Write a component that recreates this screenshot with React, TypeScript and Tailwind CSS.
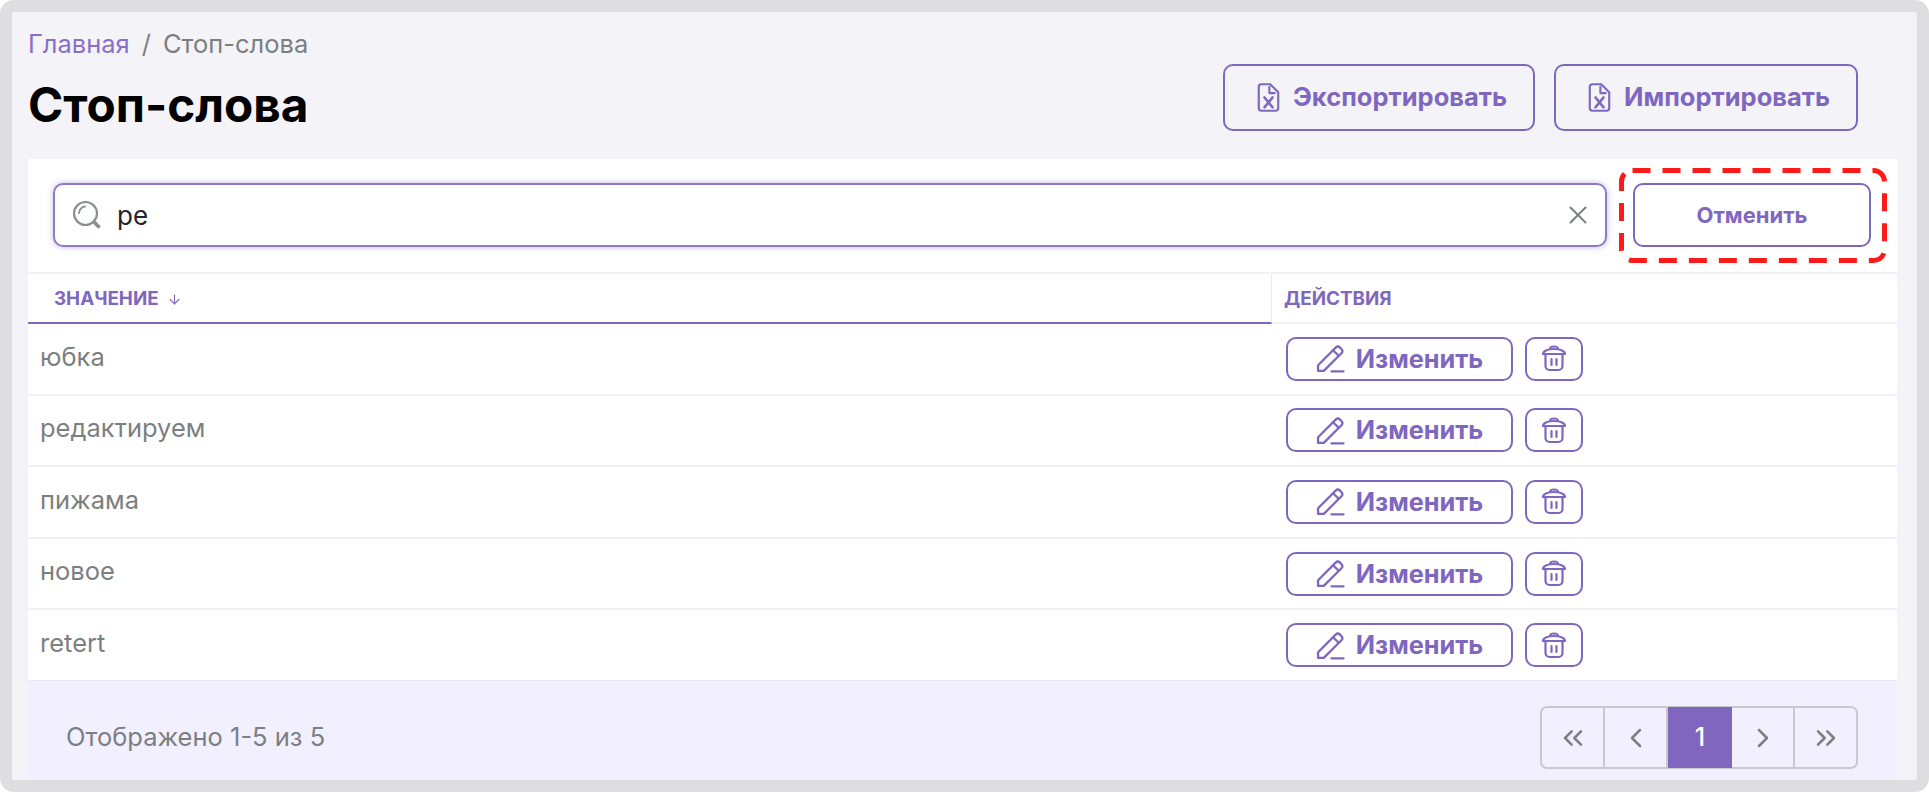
import React from "react";
import { ChevronLeft, ChevronRight, ChevronsLeft, ChevronsRight, X, ArrowDown } from "lucide-react";

const rows = ["юбка", "редактируем", "пижама", "новое", "retert"];

const FileIcon = () => (
  <svg width="23" height="31" viewBox="0 0 26 34" fill="none" stroke="currentColor" strokeWidth="2.4" strokeLinejoin="round" strokeLinecap="round">
    <path d="M5 2h10l9 9v18a3 3 0 0 1-3 3H5a3 3 0 0 1-3-3V5a3 3 0 0 1 3-3z" />
    <path d="M14 5v7h6" />
    <path d="M8.500 17l9 11M17.500 17l-9 11" strokeWidth="3" />
  </svg>
);

const SearchIcon = () => (
  <svg width="30" height="30" viewBox="0 0 30 30" fill="none" stroke="#8b9190" strokeLinecap="round">
    <circle cx="13.500" cy="13.500" r="11.500" strokeWidth="2.200" />
    <path d="M7 13a7 7 0 0 1 6-6.500" strokeWidth="2" />
    <path d="M22.500 22.500l4 4" strokeWidth="3.800" />
  </svg>
);

const PencilIcon = () => (
  <svg width="29" height="29" viewBox="0 0 28 28" fill="none" stroke="currentColor" strokeWidth="2.200" strokeLinejoin="round" strokeLinecap="round">
    <path d="M2 26v-5.500L19 3.500a3 3 0 0 1 4.200 0l1.300 1.300a3 3 0 0 1 0 4.200L7.500 26H2z" />
    <path d="M16.500 6l5.500 5.500" />
    <path d="M15 26.500h11.500" />
  </svg>
);

const TrashIcon = () => (
  <svg width="26" height="27" viewBox="0 0 26 27" fill="none" stroke="currentColor" strokeWidth="2.200" strokeLinejoin="round" strokeLinecap="round">
    <path d="M2 9c0-2.500 4-5 11-5s11 2.500 11 5H2z" />
    <path d="M9 4c0-1.500 1.500-2.500 4-2.500S17 2.500 17 4" />
    <path d="M4.500 9v12a4 4 0 0 0 4 4h9a4 4 0 0 0 4-4V9" />
    <path d="M10.500 14v6M15.500 14v6" />
  </svg>
);

const OutlineButton = ({ icon, label, width }: { icon: React.ReactNode; label: string; width: string }) => (
  <button className={`${width} h-[67px] flex items-center justify-center gap-[13px] pl-[6px] rounded-[10px] border-2 border-[#7f67bf] text-[#7f67bf] text-[25.5px] font-bold`}>
    {icon}
    {label}
  </button>
);

const PageCell = ({ children, active }: { children: React.ReactNode; active?: boolean }) => (
  <div
    className={
      active
        ? "w-[64px] flex items-center justify-center bg-[#8066bf] text-white text-[25px] font-medium -my-px"
        : "flex-1 flex items-center justify-center text-[#7c7f80] border-r-2 border-[#c9c9cd] last:border-r-0"
    }
  >
    {children}
  </div>
);

export default function App() {
  return (
    <div className="h-[792px] w-full overflow-hidden rounded-[14px] bg-[#dedee1] p-3 font-['Inter',sans-serif]">
      <div className="h-full flex flex-col rounded-[3px] bg-[#f4f4f8] pl-4 pr-5">
        <header className="h-[147px] shrink-0 flex items-start justify-between">
          <div className="pt-[18px]">
            <div className="flex items-center h-[28px] text-[25.5px] text-[#7c7f80]">
              <span className="text-[#8a6fc9]">Главная</span>
              <span className="mx-[12px]">/</span>
              <span>Стоп-слова</span>
            </div>
            <h1 className="mt-[20px] text-[47.7px] leading-[54px] font-bold text-black">Стоп-слова</h1>
          </div>
          <div className="flex gap-[19px] pt-[52px] pr-[39px]">
            <OutlineButton icon={<FileIcon />} label="Экспортировать" width="w-[312px]" />
            <OutlineButton icon={<FileIcon />} label="Импортировать" width="w-[304px]" />
          </div>
        </header>

        <main className="flex-1 flex flex-col bg-white">
          <div className="h-[113px] shrink-0 flex gap-[26px] pt-6 pb-[25px] pl-[25px] pr-[26px]">
            <div className="flex-1 flex items-center gap-[15px] pl-[17px] pr-[12px] rounded-[10px] border-2 border-[#8e79c9] shadow-[0_0_6px_rgba(127,103,191,0.45)]">
              <SearchIcon />
              <span className="flex-1 text-[26px] text-[#1f2430]">ре</span>
              <X size={30} strokeWidth={1.6} className="text-[#7c7f80]" />
            </div>
            <div className="relative w-[238px]">
              <button className="w-full h-full rounded-[10px] border-2 border-[#7f67bf] text-[#7f67bf] text-[22px] font-bold">
                Отменить
              </button>
              <svg className="absolute -left-[14px] -top-[15px]" width="268" height="95" fill="none">
                <rect x="2.500" y="2.500" width="263" height="90" rx="11" stroke="#ff1a1a" strokeWidth="5" strokeDasharray="18 12" />
              </svg>
            </div>
          </div>

          <div className="flex h-[52px] shrink-0 border-t-2 border-[#f1effa] text-[18.800px] font-bold text-[#7f67bf]">
            <div className="w-[1244px] flex items-center gap-2 pl-[26px] pt-[3px] border-b-2 border-[#7f67bf] border-r border-r-[#ecebf5]">
              ЗНАЧЕНИЕ
              <ArrowDown size={15} strokeWidth={1.8} />
            </div>
            <div className="flex-1 flex items-center pl-3 pt-[3px] border-b-2 border-[#f1effa]">ДЕЙСТВИЯ</div>
          </div>

          <div className="flex-1 flex flex-col">
            {rows.map((row) => (
              <div key={row} className="flex-1 flex items-center border-b-2 border-[#f1effa] last:border-b-0">
                <div className="w-[1244px] pl-3 pb-[4px] text-[25.5px] text-[#7c7f80]">{row}</div>
                <div className="flex gap-[12px] pl-[14px] text-[#7f67bf]">
                  <button className="w-[227px] h-[44px] flex items-center justify-center gap-[11px] rounded-[10px] border-2 border-[#7f67bf] text-[25.3px] font-bold">
                    <PencilIcon />
                    Изменить
                  </button>
                  <button className="w-[58px] h-[44px] flex items-center justify-center rounded-[10px] border-2 border-[#7f67bf]">
                    <TrashIcon />
                  </button>
                </div>
              </div>
            ))}
          </div>

          <footer className="h-[100px] shrink-0 flex items-center justify-between bg-[#f2f0fe] border-t border-[#e9e7f5] pl-[38px] pr-[39px]">
            <span className="text-[25.5px] text-[#7c7f80] pt-[14px]">Отображено 1-5 из 5</span>
            <div className="w-[318px] h-[63px] flex rounded-[7px] border-2 border-[#c9c9cd] mt-[14px]">
              <PageCell><ChevronsLeft size={32} strokeWidth={1.9} /></PageCell>
              <PageCell><ChevronLeft size={32} strokeWidth={1.9} /></PageCell>
              <PageCell active>1</PageCell>
              <PageCell><ChevronRight size={32} strokeWidth={1.9} /></PageCell>
              <PageCell><ChevronsRight size={32} strokeWidth={1.9} /></PageCell>
            </div>
          </footer>
        </main>
      </div>
    </div>
  );
}
